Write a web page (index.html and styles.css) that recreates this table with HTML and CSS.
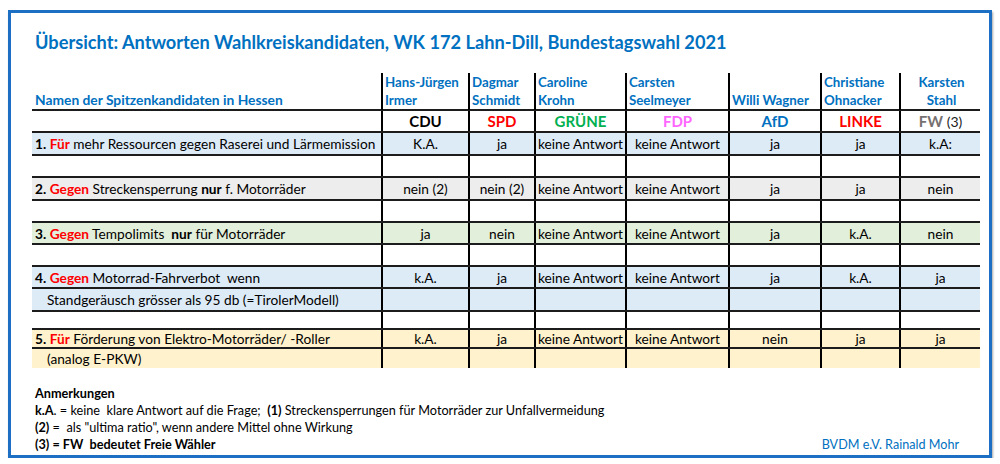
FILE: index.html
```html
<!DOCTYPE html>
<html lang="de">
<head>
<meta charset="utf-8">
<title>Übersicht Wahlkreiskandidaten</title>
<link rel="stylesheet" href="styles.css">
</head>
<body>
<div class="frame">
  <h1 class="title">Übersicht: Antworten Wahlkreiskandidaten, WK 172 Lahn-Dill, Bundestagswahl 2021</h1>

  <div class="sheet">
    <div class="row head">
      <div class="cell label names">Namen der Spitzenkandidaten in Hessen</div>
      <div class="cell name">Hans-Jürgen<br>Irmer</div>
      <div class="cell name">Dagmar<br>Schmidt</div>
      <div class="cell name">Caroline<br>Krohn</div>
      <div class="cell name">Carsten<br>Seelmeyer</div>
      <div class="cell name">Willi Wagner</div>
      <div class="cell name">Christiane<br>Ohnacker</div>
      <div class="cell name center">Karsten<br>Stahl</div>
    </div>

    <div class="row party">
      <div class="cell label"></div>
      <div class="cell val p-cdu">CDU</div>
      <div class="cell val p-spd">SPD</div>
      <div class="cell val p-gruene">GRÜNE</div>
      <div class="cell val p-fdp">FDP</div>
      <div class="cell val p-afd">AfD</div>
      <div class="cell val p-linke">LINKE</div>
      <div class="cell val"><span class="p-fw">FW</span>&nbsp;<span class="p-note">(3)</span></div>
    </div>

    <div class="row q bg-blue h23">
      <div class="cell label"><b>1.</b>&nbsp;<b class="red">Für</b>&nbsp;mehr Ressourcen gegen Raserei und Lärmemission</div>
      <div class="cell val">K.A.</div>
      <div class="cell val">ja</div>
      <div class="cell val">keine Antwort</div>
      <div class="cell val">keine Antwort</div>
      <div class="cell val">ja</div>
      <div class="cell val">ja</div>
      <div class="cell val">k.A:</div>
    </div>
    <div class="row h22">
      <div class="cell label"></div><div class="cell"></div><div class="cell"></div><div class="cell"></div><div class="cell"></div><div class="cell"></div><div class="cell"></div><div class="cell"></div>
    </div>

    <div class="row q bg-gray h23">
      <div class="cell label"><b>2.</b>&nbsp;<b class="red">Gegen</b>&nbsp;Streckensperrung&nbsp;<b>nur</b>&nbsp;f. Motorräder</div>
      <div class="cell val">nein (2)</div>
      <div class="cell val">nein (2)</div>
      <div class="cell val">keine Antwort</div>
      <div class="cell val">keine Antwort</div>
      <div class="cell val">ja</div>
      <div class="cell val">ja</div>
      <div class="cell val">nein</div>
    </div>
    <div class="row h22">
      <div class="cell label"></div><div class="cell"></div><div class="cell"></div><div class="cell"></div><div class="cell"></div><div class="cell"></div><div class="cell"></div><div class="cell"></div>
    </div>

    <div class="row q bg-green h22">
      <div class="cell label"><b>3.</b>&nbsp;<b class="red">Gegen</b>&nbsp;Tempolimits&nbsp;&nbsp;<b>nur</b>&nbsp;für Motorräder</div>
      <div class="cell val">ja</div>
      <div class="cell val">nein</div>
      <div class="cell val">keine Antwort</div>
      <div class="cell val">keine Antwort</div>
      <div class="cell val">ja</div>
      <div class="cell val">k.A.</div>
      <div class="cell val">nein</div>
    </div>
    <div class="row h22">
      <div class="cell label"></div><div class="cell"></div><div class="cell"></div><div class="cell"></div><div class="cell"></div><div class="cell"></div><div class="cell"></div><div class="cell"></div>
    </div>

    <div class="row q bg-blue h22">
      <div class="cell label"><b>4.</b>&nbsp;<b class="red">Gegen</b>&nbsp;Motorrad-Fahrverbot&nbsp;&nbsp;wenn</div>
      <div class="cell val">k.A.</div>
      <div class="cell val">ja</div>
      <div class="cell val">keine Antwort</div>
      <div class="cell val">keine Antwort</div>
      <div class="cell val">ja</div>
      <div class="cell val">k.A.</div>
      <div class="cell val">ja</div>
    </div>
    <div class="row q bg-blue h23">
      <div class="cell label sub">Standgeräusch grösser als 95 db (=TirolerModell)</div>
      <div class="cell"></div><div class="cell"></div><div class="cell"></div><div class="cell"></div><div class="cell"></div><div class="cell"></div><div class="cell"></div>
    </div>
    <div class="row h18">
      <div class="cell label"></div><div class="cell"></div><div class="cell"></div><div class="cell"></div><div class="cell"></div><div class="cell"></div><div class="cell"></div><div class="cell"></div>
    </div>

    <div class="row q bg-yellow h19">
      <div class="cell label"><b>5.</b>&nbsp;<b class="red">Für</b>&nbsp;Förderung von Elektro-Motorräder/ -Roller</div>
      <div class="cell val">k.A.</div>
      <div class="cell val">ja</div>
      <div class="cell val">keine Antwort</div>
      <div class="cell val">keine Antwort</div>
      <div class="cell val">nein</div>
      <div class="cell val">ja</div>
      <div class="cell val">ja</div>
    </div>
    <div class="row q bg-yellow h19 last">
      <div class="cell label sub">(analog E-PKW)</div>
      <div class="cell"></div><div class="cell"></div><div class="cell"></div><div class="cell"></div><div class="cell"></div><div class="cell"></div><div class="cell"></div>
    </div>
  </div>

  <div class="notes">
    <div class="note-line"><b>Anmerkungen</b></div>
    <div class="note-line"><b>k.A</b>. = keine&nbsp; klare Antwort auf die Frage;&nbsp; <b>(1)</b> Streckensperrungen für Motorräder zur Unfallvermeidung</div>
    <div class="note-line"><b>(2)</b> =&nbsp; als "ultima ratio", wenn andere Mittel ohne Wirkung</div>
    <div class="note-line last-line">
      <b>(3) = FW&nbsp; bedeutet Freie Wähler</b>
      <span class="author">BVDM e.V. Rainald Mohr</span>
    </div>
  </div>
</div>
</body>
</html>
```

FILE: styles.css
```css
* { box-sizing: border-box; }

html, body {
  margin: 0;
  padding: 0;
  background: #ffffff;
}

body {
  font-family: "Lato", "Open Sans", "Liberation Sans", sans-serif;
  color: #000;
}

.frame {
  width: 984px;
  height: 448px;
  margin: 10px 0 0 8px;
  border: 3px solid #1d6fc4;
  box-shadow: 1px 2px 2px rgba(0, 0, 0, 0.35);
  padding: 17px 0 0 21px;
}

.title {
  margin: 0;
  padding-left: 3px;
  font-size: 18.2px;
  line-height: 24px;
  font-weight: 700;
  color: #0070c0;
  height: 43px;
}

.sheet {
  width: 948px;
}

.row {
  display: grid;
  grid-template-columns: 349px 87px 66px 91px 103px 92px 79px 81px;
  border-bottom: 2px solid #1c1c1c;
  font-size: 13.7px;
}

.row.last { border-bottom: none; }

.head { height: 38px; }
.party { height: 22px; }
.h23 { height: 23px; }
.h22 { height: 22px; }
.h19 { height: 19px; }
.h18 { height: 18px; }

.bg-blue { background: #ddebf7; }
.bg-gray { background: #ededed; }
.bg-green { background: #e2efda; }
.bg-yellow { background: #fff2cc; }

.cell {
  border-left: 2px solid #000;
  display: flex;
  align-items: center;
  white-space: nowrap;
  min-width: 0;
}

.cell.label {
  border-left: none;
  padding-left: 3px;
}

.cell.label.sub { padding-left: 15px; }

.cell.val {
  justify-content: center;
  overflow: visible;
}

.head .cell {
  flex-direction: column;
  justify-content: flex-end;
  align-items: flex-start;
  padding: 0 0 1px 2px;
  font-size: 13.3px;
  line-height: 18px;
  font-weight: 700;
  color: #0070c0;
}

.head .cell.label { padding-left: 3px; font-size: 13.8px; }
.head .cell.center { align-items: center; text-align: center; }

.party .cell.val {
  font-size: 15px;
  font-weight: 700;
}

.p-cdu { color: #000; }
.p-spd { color: #ff0000; }
.p-gruene { color: #00b050; }
.p-fdp { color: #ff66ff; }
.p-afd { color: #0070c0; }
.p-linke { color: #ff0000; }
.p-fw { color: #767171; }
.p-note { color: #222; font-weight: 400; font-size: 14px; }

.red { color: #ff0000; }
b { font-weight: 700; }

.notes {
  margin-top: 16.5px;
  width: 948px;
  font-size: 12.7px;
  line-height: 17.3px;
  padding-left: 3px;
}

.note-line {
  white-space: nowrap;
}

.last-line {
  display: flex;
  justify-content: space-between;
  padding-right: 21px;
}

.author {
  color: #0070c0;
  font-size: 12.6px;
}
```
